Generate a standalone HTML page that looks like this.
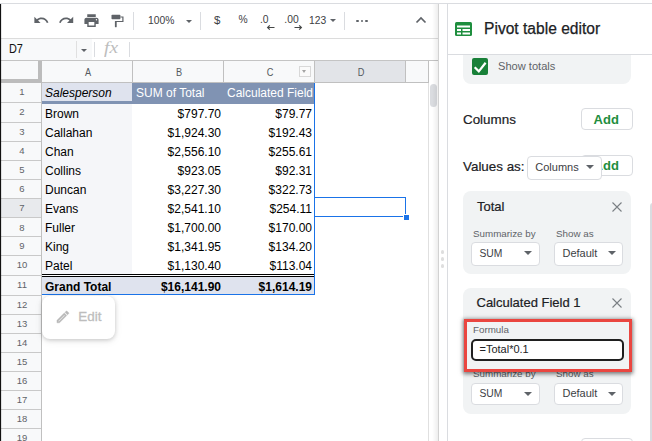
<!DOCTYPE html>
<html><head><meta charset="utf-8">
<style>
html,body{margin:0;padding:0;}
body{width:652px;height:441px;overflow:hidden;background:#fff;position:relative;font-family:"Liberation Sans",sans-serif;color:#000;}
.abs{position:absolute;}
.t{position:absolute;white-space:nowrap;line-height:1;}
.rh{position:absolute;left:1.500px;width:40px;text-align:center;font-size:9.700px;color:#5f6368;line-height:1;transform:scaleX(0.980);}
.ct{position:absolute;white-space:nowrap;line-height:1;font-size:12px;color:#000;}
.r{text-align:right;}
svg{position:absolute;overflow:visible;}
</style></head><body>

<div class="abs" style="left:0;top:3px;width:652px;height:1px;background:#dadce0"></div>
<div class="abs" style="left:0;top:38px;width:439px;height:1px;background:#dcdcdc"></div>
<div class="abs" style="left:0;top:60px;width:439px;height:1px;background:#c4c4c4"></div>
<div class="abs" style="left:1px;top:39px;width:91px;height:21px;background:#f8f9fa"></div>
<div class="t" style="left:8.600px;top:42.600px;font-size:12.400px;color:#111;transform:scaleX(0.88);transform-origin:0 0">D7</div>
<div class="abs" style="left:76px;top:41px;width:1px;height:17px;background:#e0e0e0"></div>
<div class="abs" style="left:81px;top:48.700px;width:0;height:0;border-left:3.800px solid transparent;border-right:3.800px solid transparent;border-top:3.300px solid #5f6368"></div>
<div class="abs" style="left:94px;top:42px;width:1px;height:15px;background:#dadce0"></div>
<div class="t" style="left:104px;top:40.300px;font-family:'Liberation Serif',serif;font-style:italic;font-size:16.500px;color:#bdbdbd;transform:scaleX(1.18);transform-origin:0 0">fx</div>
<div class="abs" style="left:129px;top:42px;width:1px;height:15px;background:#dadce0"></div>
<svg style="left:32.600px;top:12px" width="16.500" height="16.500" viewBox="0 0 24 24"><path fill="#5f6368" d="M12.5 8c-2.65 0-5.05.99-6.9 2.6L2 7v9h9l-3.62-3.62c1.39-1.16 3.16-1.88 5.12-1.88 3.54 0 6.55 2.31 7.6 5.5l2.37-.78C21.08 11.03 17.15 8 12.500 8z"/></svg>
<svg style="left:57.800px;top:12px" width="16.600" height="16.600" viewBox="0 0 24 24"><path fill="#5f6368" d="M18.4 10.6C16.55 8.99 14.15 8 11.5 8c-4.65 0-8.58 3.03-9.96 7.22L3.900 16c1.050-3.190 4.050-5.500 7.600-5.500 1.950 0 3.730.720 5.120 1.880L13 16h9V7l-3.600 3.600z"/></svg>
<svg style="left:82.500px;top:12px" width="17" height="17" viewBox="0 0 24 24"><path fill="#5f6368" d="M19 8H5c-1.660 0-3 1.340-3 3v6h4v4h12v-4h4v-6c0-1.660-1.340-3-3-3zm-3 11H8v-5h8v5zm3-7c-.550 0-1-.450-1-1s.450-1 1-1 1 .450 1 1-.450 1-1 1zm-1-9H6v4h12V3z"/></svg>
<svg style="left:110px;top:13px" width="16" height="16" viewBox="0 0 16 16"><rect x="1.500" y="1.700" width="8.900" height="4.500" rx="0.800" fill="#5f6368"/><path d="M10.400 4 H12.900 V8.500 H5.800" fill="none" stroke="#5f6368" stroke-width="1.200"/><rect x="4.900" y="7.900" width="1.800" height="6.300" rx="0.400" fill="#5f6368"/></svg>
<div class="abs" style="left:133px;top:12px;width:1px;height:18px;background:#dadce0"></div>
<div class="t" style="left:148px;top:15.500px;font-size:10.300px;color:#3c4043">100%</div>
<div class="abs" style="left:186px;top:20px;width:0;height:0;border-left:3.300px solid transparent;border-right:3.300px solid transparent;border-top:3.300px solid #5f6368"></div>
<div class="abs" style="left:200px;top:12px;width:1px;height:18px;background:#dadce0"></div>
<div class="t" style="left:214px;top:14.500px;font-size:11.500px;color:#3c4043">$</div>
<div class="t" style="left:238.500px;top:15px;font-size:10.300px;color:#3c4043">%</div>
<div class="t" style="left:260px;top:15.300px;font-size:10.300px;color:#3c4043">.0</div>
<svg style="left:267px;top:25px" width="8" height="5" viewBox="0 0 8 5"><path d="M0.500 2.500 H7.500 M2.800 0.300 L0.600 2.500 L2.800 4.700" fill="none" stroke="#444746" stroke-width="1.200"/></svg>
<div class="t" style="left:284.300px;top:15.300px;font-size:10.300px;color:#3c4043">.00</div>
<svg style="left:293.500px;top:24.500px" width="8" height="5" viewBox="0 0 8 5"><path d="M0.500 2.500 H7.500 M5.200 0.300 L7.400 2.500 L5.200 4.700" fill="none" stroke="#444746" stroke-width="1.200"/></svg>
<div class="t" style="left:309px;top:15.500px;font-size:10.300px;color:#3c4043">123</div>
<div class="abs" style="left:329.500px;top:19.200px;width:0;height:0;border-left:3.300px solid transparent;border-right:3.300px solid transparent;border-top:3.300px solid #5f6368"></div>
<div class="abs" style="left:344px;top:12px;width:1px;height:18px;background:#dadce0"></div>
<div class="abs" style="left:356.2px;top:19.500px;width:2.500px;height:2.500px;border-radius:50%;background:#5f6368"></div>
<div class="abs" style="left:360.8px;top:19.500px;width:2.500px;height:2.500px;border-radius:50%;background:#5f6368"></div>
<div class="abs" style="left:365.4px;top:19.500px;width:2.500px;height:2.500px;border-radius:50%;background:#5f6368"></div>
<svg style="left:415px;top:15px" width="12" height="9" viewBox="0 0 12 9"><path d="M1.500 7.500 L6 3 L10.500 7.500" fill="none" stroke="#5f6368" stroke-width="1.700"/></svg>
<div class="abs" style="left:1px;top:61px;width:427px;height:22px;background:#f8f9fa"></div>
<div class="abs" style="left:315px;top:61px;width:91px;height:22px;background:#e2e4e8"></div>
<div class="abs" style="left:1px;top:83px;width:40px;height:358px;background:#f8f9fa"></div>
<div class="abs" style="left:1px;top:199px;width:40px;height:18.5px;background:#e8eaed"></div>
<div class="abs" style="left:41px;top:82px;width:387px;height:1px;background:#c0c0c0"></div>
<div class="abs" style="left:41px;top:61px;width:1px;height:22px;background:#c0c0c0"></div>
<div class="abs" style="left:132px;top:61px;width:1px;height:22px;background:#c0c0c0"></div>
<div class="abs" style="left:223px;top:61px;width:1px;height:22px;background:#c0c0c0"></div>
<div class="abs" style="left:314px;top:61px;width:1px;height:22px;background:#c0c0c0"></div>
<div class="abs" style="left:405px;top:61px;width:1px;height:22px;background:#c0c0c0"></div>
<div class="abs" style="left:428px;top:61px;width:1px;height:22px;background:#c0c0c0"></div>
<div class="abs" style="left:1px;top:79px;width:41px;height:4px;background:#bcbcbc"></div>
<div class="abs" style="left:38px;top:61px;width:4px;height:22px;background:#bcbcbc"></div>
<div class="t" style="left:87.7px;top:66.800px;width:20px;margin-left:-10px;text-align:center;font-size:10.600px;color:#555a60;transform:scaleX(0.870)">A</div>
<div class="t" style="left:178.5px;top:66.800px;width:20px;margin-left:-10px;text-align:center;font-size:10.600px;color:#555a60;transform:scaleX(0.870)">B</div>
<div class="t" style="left:269.7px;top:66.800px;width:20px;margin-left:-10px;text-align:center;font-size:10.600px;color:#555a60;transform:scaleX(0.870)">C</div>
<div class="t" style="left:360.8px;top:66.800px;width:20px;margin-left:-10px;text-align:center;font-size:10.600px;color:#555a60;transform:scaleX(0.870)">D</div>
<div class="abs" style="left:299.300px;top:66.200px;width:11.600px;height:10.500px;border:1px solid #d8d8d8;background:#fafafa;box-sizing:border-box"></div>
<div class="abs" style="left:302.100px;top:69.700px;width:0;height:0;border-left:2.900px solid transparent;border-right:2.900px solid transparent;border-top:3.100px solid #a4a4a4"></div>
<div class="abs" style="left:41px;top:83px;width:1px;height:358px;background:#c0c0c0"></div>
<div class="abs" style="left:1px;top:102px;width:40px;height:1px;background:#c9c9c9"></div>
<div class="abs" style="left:1px;top:121.7px;width:40px;height:1px;background:#c9c9c9"></div>
<div class="abs" style="left:1px;top:140.9px;width:40px;height:1px;background:#c9c9c9"></div>
<div class="abs" style="left:1px;top:159.8px;width:40px;height:1px;background:#c9c9c9"></div>
<div class="abs" style="left:1px;top:179px;width:40px;height:1px;background:#c9c9c9"></div>
<div class="abs" style="left:1px;top:198px;width:40px;height:1px;background:#c9c9c9"></div>
<div class="abs" style="left:1px;top:217px;width:40px;height:1px;background:#c9c9c9"></div>
<div class="abs" style="left:1px;top:236px;width:40px;height:1px;background:#c9c9c9"></div>
<div class="abs" style="left:1px;top:255px;width:40px;height:1px;background:#c9c9c9"></div>
<div class="abs" style="left:1px;top:274.7px;width:40px;height:1px;background:#c9c9c9"></div>
<div class="abs" style="left:1px;top:294.5px;width:40px;height:1px;background:#c9c9c9"></div>
<div class="abs" style="left:1px;top:313.57px;width:40px;height:1px;background:#c9c9c9"></div>
<div class="abs" style="left:1px;top:332.64px;width:40px;height:1px;background:#c9c9c9"></div>
<div class="abs" style="left:1px;top:351.71px;width:40px;height:1px;background:#c9c9c9"></div>
<div class="abs" style="left:1px;top:370.78px;width:40px;height:1px;background:#c9c9c9"></div>
<div class="abs" style="left:1px;top:389.85px;width:40px;height:1px;background:#c9c9c9"></div>
<div class="abs" style="left:1px;top:408.92px;width:40px;height:1px;background:#c9c9c9"></div>
<div class="abs" style="left:1px;top:427.99px;width:40px;height:1px;background:#c9c9c9"></div>
<div class="abs" style="left:1px;top:447.06px;width:40px;height:1px;background:#c9c9c9"></div>
<div class="abs" style="left:1px;top:466.13px;width:40px;height:1px;background:#c9c9c9"></div>
<div class="rh" style="top:87px">1</div>
<div class="rh" style="top:106.9px">2</div>
<div class="rh" style="top:127.1px">3</div>
<div class="rh" style="top:146.1px">4</div>
<div class="rh" style="top:165.2px">5</div>
<div class="rh" style="top:184.1px">6</div>
<div class="rh" style="top:203.2px">7</div>
<div class="rh" style="top:222.5px">8</div>
<div class="rh" style="top:241px">9</div>
<div class="rh" style="top:260px">10</div>
<div class="rh" style="top:280.35px">11</div>
<div class="rh" style="top:300.35px">12</div>
<div class="rh" style="top:319.1px">13</div>
<div class="rh" style="top:338.35px">14</div>
<div class="rh" style="top:357.1px">15</div>
<div class="rh" style="top:375.9px">16</div>
<div class="rh" style="top:394.9px">17</div>
<div class="rh" style="top:413.9px">18</div>
<div class="rh" style="top:433.1px">19</div>
<div class="abs" style="left:42px;top:83px;width:90px;height:19.5px;background:#dfe3ee"></div>
<div class="abs" style="left:132px;top:83px;width:182px;height:19.5px;background:#8093b3"></div>
<div class="abs" style="left:42px;top:102.5px;width:90px;height:172.7px;background:#f5f6f9"></div>
<div class="abs" style="left:42px;top:101px;width:272px;height:2.5px;background:#8093b3"></div>
<div class="abs" style="left:42px;top:275.2px;width:272px;height:19.8px;background:#dfe3ee"></div>
<div class="abs" style="left:42px;top:273.500px;width:272px;height:3px;background:#000"></div>
<div class="abs" style="left:42px;top:274.500px;width:272px;height:1px;background:#fff"></div>
<div class="abs" style="left:314px;top:83px;width:1px;height:212px;background:#1a73e8"></div>
<div class="abs" style="left:42px;top:294px;width:273px;height:1.300px;background:#1a73e8"></div>
<div class="ct" style="left:45px;top:86.5px;font-style:italic">Salesperson</div>
<div class="ct" style="left:136px;top:86.5px;color:#fff">SUM of Total</div>
<div class="ct" style="left:227px;top:86.5px;color:#fff">Calculated Field</div>
<div class="ct" style="left:45px;top:108.35px">Brown</div>
<div class="ct r" style="left:132px;width:89px;top:108.35px">$797.70</div>
<div class="ct r" style="left:223px;width:89px;top:108.35px">$79.77</div>
<div class="ct" style="left:45px;top:126.8px">Callahan</div>
<div class="ct r" style="left:132px;width:89px;top:126.8px">$1,924.30</div>
<div class="ct r" style="left:223px;width:89px;top:126.8px">$192.43</div>
<div class="ct" style="left:45px;top:145.85px">Chan</div>
<div class="ct r" style="left:132px;width:89px;top:145.85px">$2,556.10</div>
<div class="ct r" style="left:223px;width:89px;top:145.85px">$255.61</div>
<div class="ct" style="left:45px;top:164.9px">Collins</div>
<div class="ct r" style="left:132px;width:89px;top:164.9px">$923.05</div>
<div class="ct r" style="left:223px;width:89px;top:164.9px">$92.31</div>
<div class="ct" style="left:45px;top:184px">Duncan</div>
<div class="ct r" style="left:132px;width:89px;top:184px">$3,227.30</div>
<div class="ct r" style="left:223px;width:89px;top:184px">$322.73</div>
<div class="ct" style="left:45px;top:203px">Evans</div>
<div class="ct r" style="left:132px;width:89px;top:203px">$2,541.10</div>
<div class="ct r" style="left:223px;width:89px;top:203px">$254.11</div>
<div class="ct" style="left:45px;top:222px">Fuller</div>
<div class="ct r" style="left:132px;width:89px;top:222px">$1,700.00</div>
<div class="ct r" style="left:223px;width:89px;top:222px">$170.00</div>
<div class="ct" style="left:45px;top:241px">King</div>
<div class="ct r" style="left:132px;width:89px;top:241px">$1,341.95</div>
<div class="ct r" style="left:223px;width:89px;top:241px">$134.20</div>
<div class="ct" style="left:45px;top:260.35px">Patel</div>
<div class="ct r" style="left:132px;width:89px;top:260.35px">$1,130.40</div>
<div class="ct r" style="left:223px;width:89px;top:260.35px">$113.04</div>
<div class="ct" style="left:45px;top:280.6px;font-weight:bold">Grand Total</div>
<div class="ct r" style="left:132px;width:89px;top:280.6px;font-weight:bold">$16,141.90</div>
<div class="ct r" style="left:223px;width:89px;top:280.6px;font-weight:bold">$1,614.19</div>
<div class="abs" style="left:314px;top:197px;width:92px;height:19.5px;border:1px solid #1a73e8;box-sizing:border-box"></div>
<div class="abs" style="left:402.500px;top:213.8px;width:5px;height:5px;background:#1a73e8;border:0.500px solid #fff"></div>
<div class="abs" style="left:42px;top:296px;width:73px;height:43px;border-radius:8px;background:#fff;box-shadow:0 1px 4px rgba(0,0,0,0.18),0 2px 8px rgba(0,0,0,0.08)"></div>
<svg style="left:55px;top:309px" width="15.800" height="15.800" viewBox="0 0 24 24"><path fill="#b8b8b8" stroke="#b8b8b8" stroke-width="0.700" d="M3 17.250V21h3.750L17.810 9.940l-3.750-3.750L3 17.250zM5.920 19H5v-.920l9.060-9.060.920.920L5.920 19zM20.710 5.630l-2.340-2.340c-.200-.200-.450-.290-.710-.290s-.510.100-.700.290l-1.830 1.830 3.750 3.750 1.830-1.830c.390-.390.390-1.020 0-1.410z"/></svg>
<div class="t" style="left:78.300px;top:310px;font-size:13.400px;color:#bdbdbd;-webkit-text-stroke:0.300px #bdbdbd">Edit</div>
<div class="abs" style="left:428px;top:83px;width:1px;height:358px;background:#e0e0e0"></div>
<div class="abs" style="left:429.500px;top:84px;width:7px;height:23px;border-radius:3.500px;background:#dadce0"></div>
<div class="abs" style="left:432px;top:4px;width:6px;height:437px;background:linear-gradient(to right,rgba(0,0,0,0),rgba(0,0,0,0.07))"></div>
<div class="abs" style="left:438px;top:4px;width:1px;height:437px;background:#d2d2d2"></div>
<div class="abs" style="left:0;top:4px;width:1px;height:437px;background:#111"></div>
<div class="abs" style="left:1px;top:4px;width:1px;height:437px;background:rgba(0,0,0,0.1)"></div>
<div class="abs" style="left:440.500px;top:250.2px;width:3.600px;height:3.600px;border-radius:50%;background:#dedede"></div>
<div class="abs" style="left:440.500px;top:257.2px;width:3.600px;height:3.600px;border-radius:50%;background:#dedede"></div>
<div class="abs" style="left:440.500px;top:264.2px;width:3.600px;height:3.600px;border-radius:50%;background:#dedede"></div>
<div class="abs" style="left:447px;top:4px;width:1px;height:437px;background:#dadce0"></div>
<div class="abs" style="left:448px;top:54px;width:204px;height:1px;background:#dadce0"></div>
<svg style="left:454.500px;top:22px" width="17" height="14" viewBox="0 0 17 14"><rect x="0" y="0" width="17" height="14" rx="1.500" fill="#1e8e3e"/><rect x="2" y="3.500" width="13" height="2" fill="#fff"/><rect x="2" y="7" width="4" height="2" fill="#fff"/><rect x="7.500" y="7" width="7.500" height="2" fill="#fff"/><rect x="2" y="10.500" width="4" height="2" fill="#fff"/><rect x="7.500" y="10.500" width="7.500" height="2" fill="#fff"/></svg>
<div class="t" style="left:484px;top:20px;font-size:15.600px;color:#202124;-webkit-text-stroke:0.250px #202124;transform:translateY(0.900px) scaleX(0.999)">Pivot table editor</div>
<div class="abs" style="left:463px;top:55px;width:168px;height:29px;background:#f1f3f4;border-radius:0 0 8px 8px"></div>
<div class="abs" style="left:472px;top:58px;width:16px;height:17px;background:#188038;border-radius:2px"></div>
<svg style="left:472px;top:58px" width="16" height="17" viewBox="0 0 16 17"><path d="M2.700 9.300 L6.800 13.400 L13.600 4.800" fill="none" stroke="#fff" stroke-width="2.200"/></svg>
<div class="t" style="left:498px;top:60.800px;font-size:11.100px;color:#5f6368">Show totals</div>
<div class="t" style="left:463px;top:113px;font-size:13.400px;color:#202124;-webkit-text-stroke:0.200px #202124">Columns</div>
<div class="abs" style="left:581px;top:108px;width:51.5px;height:22px;background:#fff;border:1px solid #dadce0;border-radius:4px;box-sizing:border-box"></div>
<div class="t" style="left:580.5px;top:112.5px;width:51.5px;text-align:center;font-size:13px;font-weight:bold;color:#1e8e3e">Add</div>
<div class="t" style="left:463px;top:160px;font-size:13.400px;color:#202124;-webkit-text-stroke:0.200px #202124">Values as:</div>
<div class="abs" style="left:581px;top:155px;width:51.5px;height:20.5px;background:#fff;border:1px solid #dadce0;border-radius:4px;box-sizing:border-box"></div>
<div class="t" style="left:580.5px;top:158.75px;width:51.5px;text-align:center;font-size:13px;font-weight:bold;color:#1e8e3e">Add</div>
<div class="abs" style="left:527px;top:156px;width:75px;height:23.5px;background:#fff;border:1px solid #dadce0;border-radius:4px;box-sizing:border-box"></div>
<div class="t" style="left:535.3px;top:161.632px;font-size:11px;color:#3c4043">Columns</div>
<div class="abs" style="left:586px;top:165.3px;width:0;height:0;border-left:4px solid transparent;border-right:4px solid transparent;border-top:4px solid #5f6368"></div>
<div class="abs" style="left:463px;top:191px;width:168px;height:82.500px;background:#f1f3f4;border-radius:8px"></div>
<div class="t" style="left:477px;top:200px;font-size:13px;color:#202124;-webkit-text-stroke:0.200px #202124">Total</div>
<svg style="left:612px;top:201.5px" width="10" height="10" viewBox="0 0 10 10"><path d="M0.500 0.500 L9.500 9.500 M9.500 0.500 L0.500 9.500" stroke="#7a7f84" stroke-width="1.100" fill="none"/></svg>
<div class="t" style="left:473px;top:228.700px;font-size:9.800px;color:#5f6368">Summarize by</div>
<div class="t" style="left:556px;top:228.700px;font-size:9.800px;color:#5f6368">Show as</div>
<div class="abs" style="left:471px;top:242px;width:68.5px;height:23.5px;background:#fff;border:1px solid #dadce0;border-radius:4px;box-sizing:border-box"></div>
<div class="t" style="left:479.5px;top:248.774px;font-size:10.3px;color:#3c4043">SUM</div>
<div class="abs" style="left:524px;top:251.2px;width:0;height:0;border-left:4px solid transparent;border-right:4px solid transparent;border-top:4px solid #5f6368"></div>
<div class="abs" style="left:554px;top:242px;width:68.5px;height:23.5px;background:#fff;border:1px solid #dadce0;border-radius:4px;box-sizing:border-box"></div>
<div class="t" style="left:562.5px;top:247.732px;font-size:11px;color:#3c4043">Default</div>
<div class="abs" style="left:607.5px;top:251.2px;width:0;height:0;border-left:4px solid transparent;border-right:4px solid transparent;border-top:4px solid #5f6368"></div>
<div class="abs" style="left:463px;top:288px;width:168px;height:125.500px;background:#f1f3f4;border-radius:8px"></div>
<div class="t" style="left:476.500px;top:296px;font-size:13px;color:#202124;-webkit-text-stroke:0.200px #202124">Calculated Field 1</div>
<svg style="left:612px;top:297.5px" width="10" height="10" viewBox="0 0 10 10"><path d="M0.500 0.500 L9.500 9.500 M9.500 0.500 L0.500 9.500" stroke="#7a7f84" stroke-width="1.100" fill="none"/></svg>
<div class="t" style="left:473px;top:368.500px;font-size:9.800px;color:#5f6368">Summarize by</div>
<div class="t" style="left:556px;top:368.500px;font-size:9.800px;color:#5f6368">Show as</div>
<div class="abs" style="left:471px;top:382.5px;width:68.5px;height:22.5px;background:#fff;border:1px solid #dadce0;border-radius:4px;box-sizing:border-box"></div>
<div class="t" style="left:479.5px;top:389.174px;font-size:10.3px;color:#3c4043">SUM</div>
<div class="abs" style="left:524px;top:391.6px;width:0;height:0;border-left:4px solid transparent;border-right:4px solid transparent;border-top:4px solid #5f6368"></div>
<div class="abs" style="left:554px;top:382.5px;width:68.5px;height:22.5px;background:#fff;border:1px solid #dadce0;border-radius:4px;box-sizing:border-box"></div>
<div class="t" style="left:562.5px;top:388.132px;font-size:11px;color:#3c4043">Default</div>
<div class="abs" style="left:607.5px;top:391.6px;width:0;height:0;border-left:4px solid transparent;border-right:4px solid transparent;border-top:4px solid #5f6368"></div>
<div class="abs" style="left:464px;top:319px;width:168px;height:52.500px;background:#f1f3f4;border:3px solid #ea4640;box-sizing:border-box;box-shadow:0 1px 4px 1px rgba(0,0,0,0.5)"></div>
<div class="t" style="left:473px;top:325.300px;font-size:9.800px;color:#5f6368">Formula</div>
<div class="abs" style="left:471px;top:339px;width:152.500px;height:21.500px;background:#fff;border:2px solid #1f1f1f;border-radius:5px;box-sizing:border-box"></div>
<div class="t" style="left:479.500px;top:344px;font-size:11px;color:#202124">=Total*0.1</div>
<div class="abs" style="left:581px;top:437.500px;width:51.500px;height:10px;background:#fff;border:1px solid #dadce0;border-radius:4px;box-sizing:border-box"></div>
<div class="abs" style="left:649.600px;top:202.500px;width:4px;height:240px;background:#dadce0;border-radius:3px 0 0 0"></div>
</body></html>
